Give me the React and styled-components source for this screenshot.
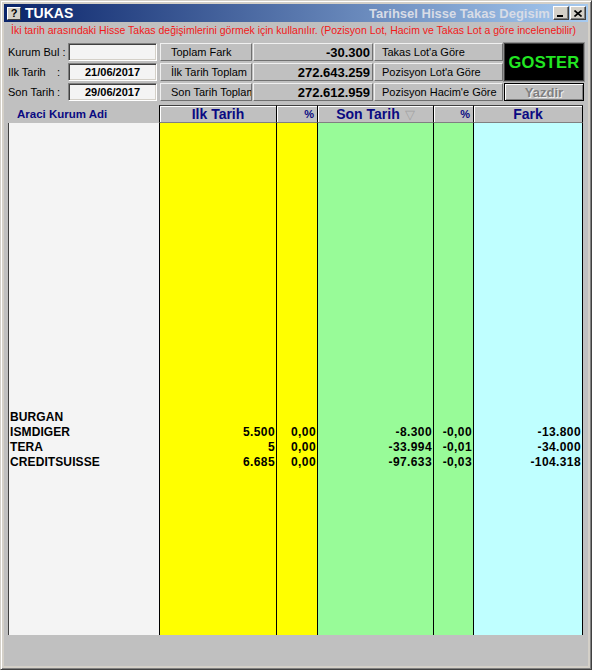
import React from "react";
import styled, { createGlobalStyle } from "styled-components";

const GlobalStyle = createGlobalStyle`
  html, body {
    margin: 0;
    padding: 0;
    background: #c0c0c0;
  }
  body {
    font-family: "Liberation Sans", Arial, sans-serif;
  }
  * {
    box-sizing: border-box;
  }
`;

const Window = styled.div`
  width: 592px;
  height: 670px;
  display: flex;
  flex-direction: column;
  background: #d4d0c8;
  border: 1px solid;
  border-color: #d4d0c8 #404040 #404040 #d4d0c8;
  box-shadow: inset 1px 1px #fff, inset -1px -1px #808080;
  padding: 3px;
`;

const TitleBar = styled.div`
  height: 18px;
  display: flex;
  align-items: center;
  padding: 0 2px 0 3px;
  background: linear-gradient(to right, #0a246a, #a6caf0);
`;

const HelpIcon = styled.div`
  width: 14px;
  height: 13px;
  display: flex;
  align-items: center;
  justify-content: center;
  background: #d4d0c8;
  border: 1px solid;
  border-color: #fff #404040 #404040 #fff;
  font-size: 11px;
  font-weight: bold;
  color: #000;
`;

const TitleText = styled.div`
  margin-left: 4px;
  color: #fff;
  font-size: 14px;
  font-weight: bold;
`;

const TitleCaption = styled.div`
  margin-left: auto;
  width: 182px;
  overflow: hidden;
  white-space: nowrap;
  color: #d8dce6;
  font-size: 13px;
  font-weight: bold;
`;

const CaptionButton = styled.div`
  width: 16px;
  height: 14px;
  margin-left: ${(p) => (p.gap ? "1px" : "2px")};
  display: flex;
  align-items: center;
  justify-content: center;
  background: #d4d0c8;
  border: 1px solid;
  border-color: #fff #404040 #404040 #fff;
  box-shadow: inset -1px -1px #808080;
`;

const Client = styled.div`
  flex: 1;
  display: flex;
  flex-direction: column;
  background: #c0c0c0;
  padding: 0 4px;
`;

const Hint = styled.div`
  height: 21px;
  padding: 1px 0 0 3px;
  color: #f21818;
  font-size: 10.5px;
  line-height: 14px;
  white-space: nowrap;
`;

const Panel = styled.div`
  display: grid;
  grid-template-columns: 59px 91px 92px 120px 129px 80px;
  grid-template-rows: 18px 18px 18px;
  column-gap: 1px;
  row-gap: 2px;
`;

const Label = styled.div`
  display: flex;
  align-items: center;
  justify-content: space-between;
  padding-right: ${(p) => (p.wide ? "3px" : "7px")};
  font-size: 11px;
  color: #000;
  white-space: pre;
`;

const Field = styled.div`
  width: 89px;
  height: 18px;
  display: flex;
  align-items: center;
  justify-content: center;
  background: #f4f4f4;
  border: 1px solid;
  border-color: #808080 #fff #fff #808080;
  box-shadow: inset 1px 1px #404040, inset -1px -1px #d4d0c8;
  font-size: 11px;
  font-weight: bold;
  color: #000;
`;

const Button = styled.div`
  display: flex;
  align-items: center;
  justify-content: ${(p) => (p.value ? "flex-end" : "flex-start")};
  padding: ${(p) => (p.value ? "0 2px 0 0" : p.narrow ? "0 0 0 7px" : "0 0 0 10px")};
  background: #c0c0c0;
  border: 1px solid;
  border-color: #f0f0f0 #707070 #707070 #f0f0f0;
  font-size: ${(p) => (p.value ? "13px" : "11px")};
  font-weight: ${(p) => (p.value ? "bold" : "normal")};
  color: #000;
  white-space: nowrap;
  overflow: hidden;
`;

const ShowButton = styled.div`
  grid-column: 6;
  grid-row: 1 / span 2;
  display: flex;
  align-items: center;
  justify-content: center;
  background: #000;
  border: 1px solid #404040;
  box-shadow: 0 0 0 1px #909090;
  color: #22e622;
  font-size: 16.5px;
  font-weight: bold;
  letter-spacing: 0.2px;
`;

const PrintButton = styled.div`
  grid-column: 6;
  grid-row: 3;
  display: flex;
  align-items: center;
  justify-content: center;
  background: #c0c0c0;
  border: 1px solid #000;
  box-shadow: inset 1px 1px #fff, inset -1px -1px #808080;
  color: #808080;
  text-shadow: 1px 1px #f0f0f0;
  font-size: 13px;
  font-weight: bold;
`;

const COLS = "151px 117px 41px 116px 40px 110px";

const DataGrid = styled.div`
  margin-top: 4px;
  display: grid;
  grid-template-columns: ${COLS};
  grid-template-rows: 18px 512px;
`;

const HeadCell = styled.div`
  display: flex;
  align-items: center;
  justify-content: ${(p) => (p.align === "left" ? "flex-start" : p.align === "right" ? "flex-end" : "center")};
  padding: ${(p) => (p.align === "left" ? "0 0 0 9px" : p.align === "right" ? "0 3px 0 0" : "0")};
  background: #c0c0c0;
  color: #0a0a82;
  font-weight: bold;
  font-size: ${(p) => (p.small ? "11px" : p.align === "left" ? "11.5px" : "14px")};
  border-left: ${(p) => (p.plain ? "none" : "1px solid #000")};
  border-right: ${(p) => (p.last ? "1px solid #000" : "none")};
  border-top: ${(p) => (p.plain ? "none" : "1px solid #404040")};
  border-bottom: ${(p) => (p.plain ? "none" : "1px solid #808080")};
  box-shadow: ${(p) => (p.plain ? "none" : "inset 1px 1px #fff")};
  white-space: nowrap;
`;

const SortMark = styled.span`
  margin-left: 5px;
  color: #a0a0a0;
  font-size: 13px;
  font-weight: normal;
`;

const BodyCol = styled.div`
  background: ${(p) => p.bg};
  border-left: 1px solid ${(p) => (p.first ? "#404040" : "#000")};
  border-right: ${(p) => (p.last ? "1px solid #000" : "none")};
  padding-top: 287px;
  overflow: hidden;
`;

const Cell = styled.div`
  height: 15px;
  line-height: 15px;
  padding: ${(p) => (p.name ? "0 0 0 1px" : "0 1px 0 0")};
  text-align: ${(p) => (p.name ? "left" : "right")};
  font-size: 12px;
  font-weight: bold;
  letter-spacing: ${(p) => (p.name ? "0.1px" : "0.4px")};
  color: #000;
  white-space: nowrap;
`;

const columns = [
  { title: "Araci Kurum Adi", bg: "#f4f4f4", align: "left", plain: true },
  { title: "Ilk Tarih", bg: "#ffff00" },
  { title: "%", bg: "#ffff00", align: "right", small: true },
  { title: "Son Tarih", bg: "#98fb98", sort: true },
  { title: "%", bg: "#98fb98", align: "right", small: true },
  { title: "Fark", bg: "#bfffff", last: true },
];

const rows = [
  ["BURGAN", "", "", "", "", ""],
  ["ISMDIGER", "5.500", "0,00", "-8.300", "-0,00", "-13.800"],
  ["TERA", "5", "0,00", "-33.994", "-0,01", "-34.000"],
  ["CREDITSUISSE", "6.685", "0,00", "-97.633", "-0,03", "-104.318"],
];

const App = () => {
  return (
    <>
      <GlobalStyle />
      <Window>
        <TitleBar>
          <HelpIcon>?</HelpIcon>
          <TitleText>TUKAS</TitleText>
          <TitleCaption>Tarihsel Hisse Takas Degisimleri</TitleCaption>
          <CaptionButton>
            <svg width="8" height="8" viewBox="0 0 8 8">
              <rect x="0" y="6" width="6" height="2" fill="#000" />
            </svg>
          </CaptionButton>
          <CaptionButton gap>
            <svg width="8" height="7" viewBox="0 0 8 7">
              <path d="M0.5 0.5 L7.5 6.5 M7.5 0.5 L0.5 6.5" stroke="#000" strokeWidth="1.6" />
            </svg>
          </CaptionButton>
        </TitleBar>
        <Client>
          <Hint>
            İki tarih arasındaki Hisse Takas değişimlerini görmek için kullanılır. (Pozisyon Lot, Hacim ve Takas Lot a göre incelenebilir)
          </Hint>
          <Panel>
            <Label wide>Kurum Bul :</Label>
            <Field />
            <Button>Toplam Fark</Button>
            <Button value>-30.300</Button>
            <Button narrow>Takas Lot'a Göre</Button>
            <ShowButton>GOSTER</ShowButton>

            <Label>
              <span>Ilk Tarih</span>
              <span>:</span>
            </Label>
            <Field>21/06/2017</Field>
            <Button>İlk Tarih Toplam</Button>
            <Button value>272.643.259</Button>
            <Button narrow>Pozisyon Lot'a Göre</Button>

            <Label>
              <span>Son Tarih</span>
              <span>:</span>
            </Label>
            <Field>29/06/2017</Field>
            <Button>Son Tarih Toplam</Button>
            <Button value>272.612.959</Button>
            <Button narrow>Pozisyon Hacim'e Göre</Button>
            <PrintButton>Yazdir</PrintButton>
          </Panel>
          <DataGrid>
            {columns.map((col, i) => (
              <HeadCell
                key={"h" + i}
                align={col.align}
                small={col.small}
                plain={col.plain}
                last={col.last}
              >
                {col.title}
                {col.sort && <SortMark>▽</SortMark>}
              </HeadCell>
            ))}
            {columns.map((col, i) => (
              <BodyCol key={"c" + i} bg={col.bg} first={i === 0} last={col.last}>
                {rows.map((row, r) => (
                  <Cell key={r} name={i === 0}>
                    {row[i]}
                  </Cell>
                ))}
              </BodyCol>
            ))}
          </DataGrid>
        </Client>
      </Window>
    </>
  );
};

export default App;
